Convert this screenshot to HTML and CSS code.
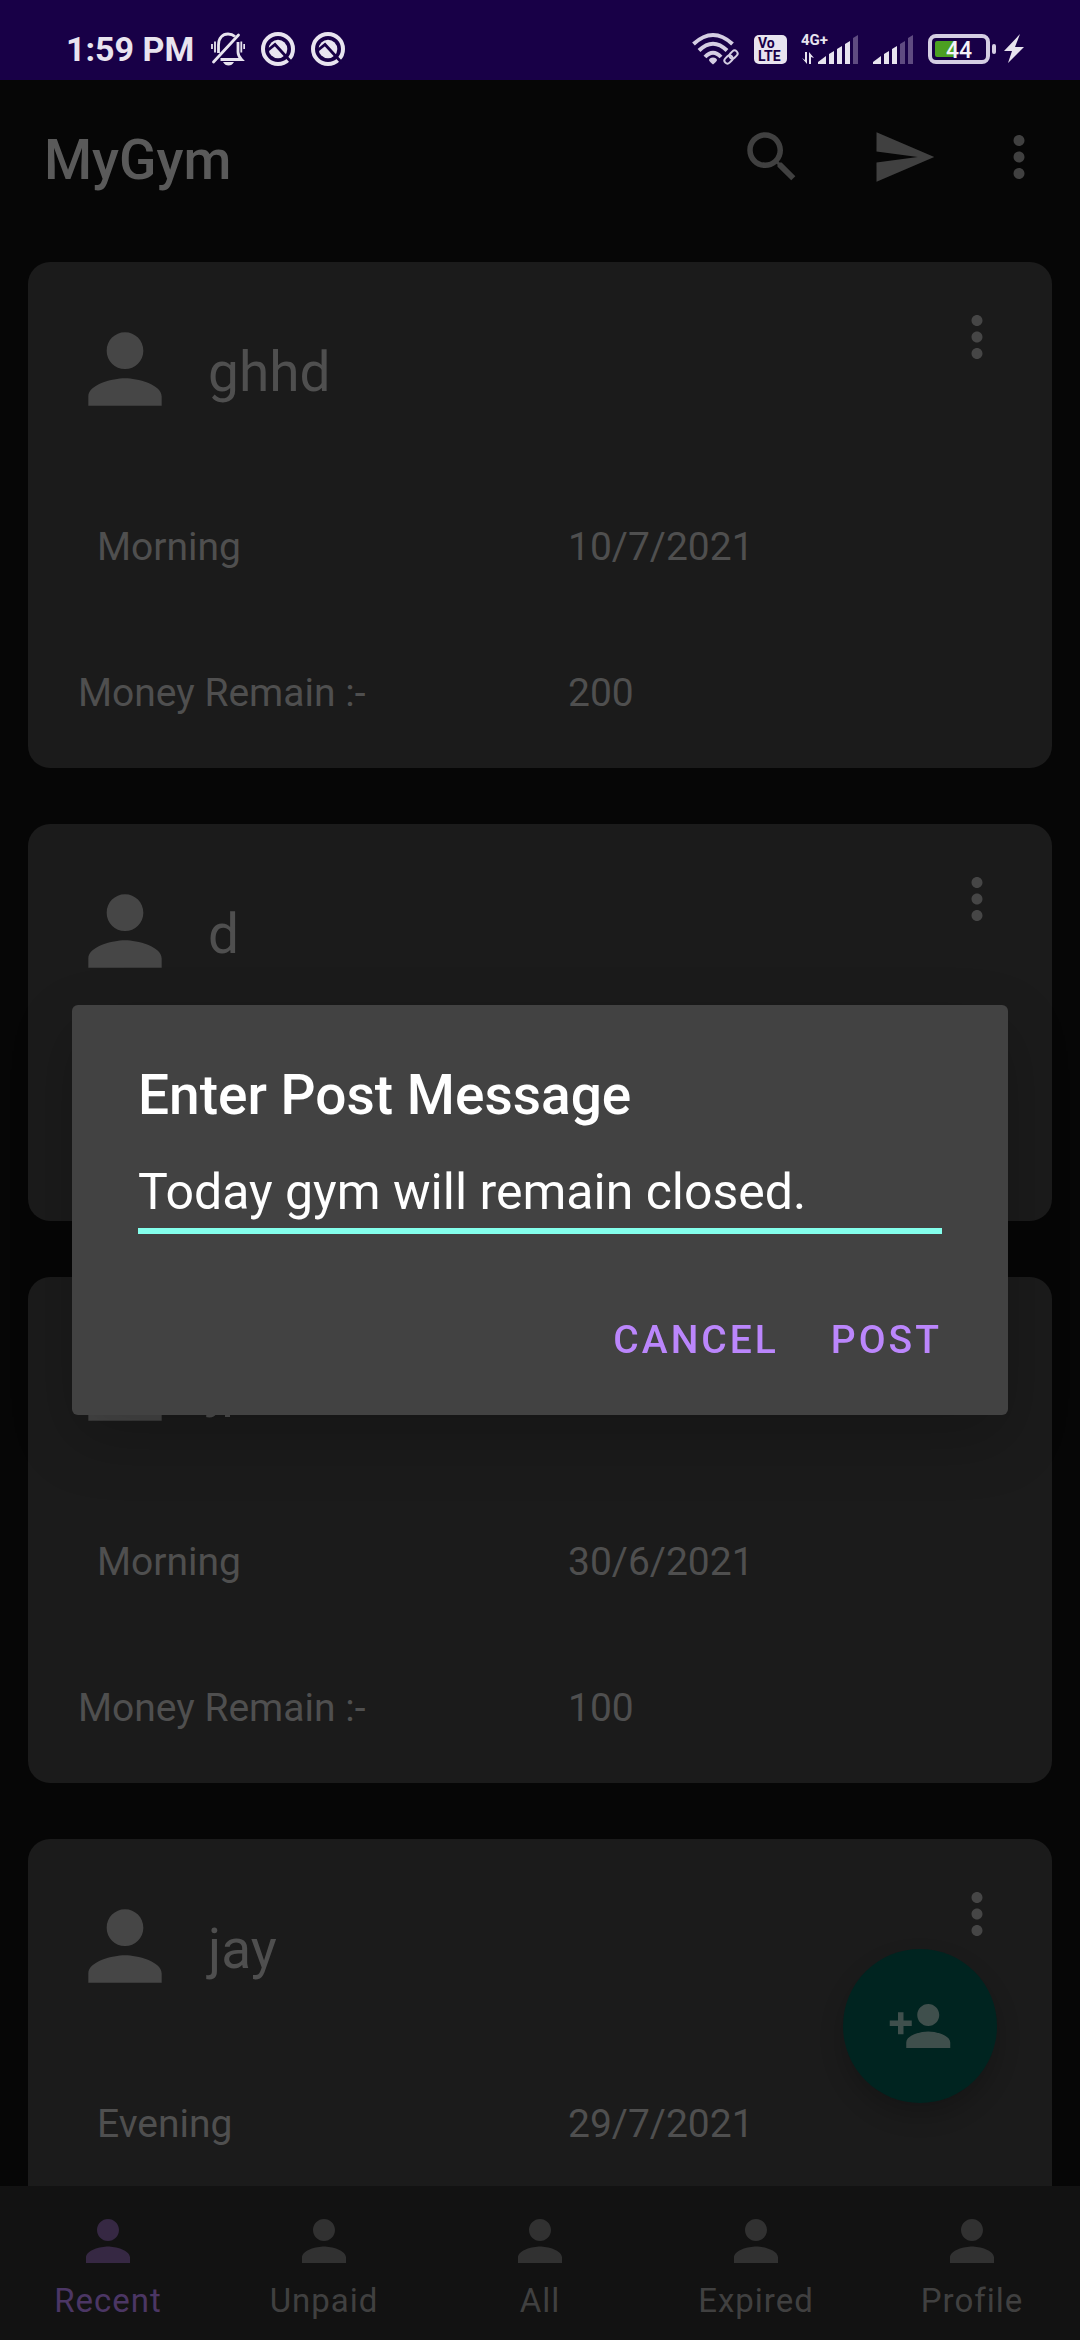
FILE: index.html
```html
<!DOCTYPE html>
<html lang="en">
<head>
  <meta charset="utf-8">
  <meta name="viewport" content="width=device-width, initial-scale=1">
  <title>MyGym</title>
  <link rel="stylesheet" href="styles.css">
</head>
<body>
  <svg class="sprite" aria-hidden="true">
    <symbol id="person" viewBox="0 0 24 24"><path d="M12 12c2.21 0 4-1.79 4-4s-1.79-4-4-4-4 1.79-4 4 1.79 4 4 4zm0 2c-2.67 0-8 1.34-8 4v2h16v-2c0-2.66-5.33-4-8-4z"/></symbol>
    <symbol id="more" viewBox="0 0 24 24"><path d="M12 8c1.1 0 2-.9 2-2s-.9-2-2-2-2 .9-2 2 .9 2 2 2zm0 2c-1.1 0-2 .9-2 2s.9 2 2 2 2-.9 2-2-.9-2-2-2zm0 6c-1.1 0-2 .9-2 2s.9 2 2 2 2-.9 2-2-.9-2-2-2z"/></symbol>
    <symbol id="scan" viewBox="0 0 34 34">
      <circle cx="17" cy="17" r="15" fill="none" stroke="currentColor" stroke-width="4"/>
      <circle cx="17" cy="17" r="9.300"/>
      <path class="glyph__cut" d="M6 19 14 12.500 31 31" fill="none" stroke-width="2.800"/>
    </symbol>
  </svg>

  <div class="app">
    <header class="status">
      <div class="status__side">
        <span class="status__time">1:59 PM</span>
        <svg class="glyph" width="34" height="34" viewBox="0 0 34 34" aria-label="Silent">
          <path fill="none" stroke="currentColor" stroke-width="2.800" d="M7.500 21V13C7.500 6 11.500 2 17 2Q21 2 24 4.500M27 10V20Q27 24 30.500 27.500H9.500"/>
          <path stroke="currentColor" stroke-width="2.800" stroke-linecap="round" d="M2.500 30 27.500 3"/>
          <path stroke="currentColor" stroke-width="1.800" d="M1 12v5M4 9.500v11M30.300 9.500v11M33.200 12v5"/>
          <path d="M12 30h11q-2 3.500-5.500 3.500T12 30Z"/>
        </svg>
        <svg class="glyph" width="34" height="34" aria-hidden="true"><use href="#scan"/></svg>
        <svg class="glyph" width="34" height="34" aria-hidden="true"><use href="#scan"/></svg>
      </div>
      <div class="status__side status__side--end">
        <svg class="glyph glyph--soft" width="48" height="34" viewBox="0 0 48 34" aria-label="Wi-Fi">
          <g fill="none" stroke="currentColor" stroke-width="4">
            <path d="M1.500 12Q21 -6 40.500 12"/>
            <path d="M7 18.500Q21 5 35 18.500"/>
            <path d="M13 25Q21 16.500 29 25"/>
          </g>
          <path d="M21 25.500q3.500 0 4 2.500 0 1-4 4.500-4-3.500-4-4.500.500-2.500 4-2.500Z"/>
          <g fill="none" stroke="currentColor" stroke-width="2" transform="rotate(-45 39 25)">
            <rect x="31" y="22" width="9" height="6" rx="3"/>
            <rect x="38" y="22" width="9" height="6" rx="3"/>
          </g>
        </svg>
        <svg class="glyph" width="33" height="30" viewBox="0 0 33 30" aria-label="VoLTE">
          <rect width="33" height="29" y="1" rx="5"/>
          <text class="glyph__dark" x="4" y="14" font-size="14">Vo</text>
          <text class="glyph__dark" x="4" y="27" font-size="14">LTE</text>
        </svg>
        <svg class="glyph" width="58" height="34" viewBox="0 0 58 34" aria-label="4G+ signal">
          <text class="glyph__label" x="0" y="13" font-size="15">4G+</text>
          <path d="M1 26 6 32V20H4v8ZM8 32V20l5 6-3-1v7Z"/>
          <path d="M17 32v-2l8-6v8ZM28 32V22l5-3v13ZM36 32V17l5-3v18ZM44 32V12l5-3v23Z"/>
          <path class="glyph__faint" d="M52 32V6l5-3v29Z"/>
        </svg>
        <svg class="glyph" width="41" height="34" viewBox="0 0 41 34" aria-label="Second signal">
          <path d="M0 32v-2l8-6v8ZM11 32V22l5-3v13ZM19 32V17l5-3v18Z"/>
          <path class="glyph__faint" d="M27 32V12l5-3v23ZM35 32V6l5-3v29Z"/>
        </svg>
        <span class="power">
          <svg class="glyph glyph--soft" width="68" height="30" viewBox="0 0 68 30" aria-label="Battery 44%">
            <rect x="2" y="2" width="58" height="26" rx="6" fill="none" stroke="currentColor" stroke-width="4"/>
            <rect x="64" y="10" width="4" height="10" rx="2"/>
            <path class="glyph__charge" d="M9 7h17v16H9q-2 0-2-2V9q0-2 2-2Z"/>
            <text class="glyph__level" x="31" y="24" text-anchor="middle" font-size="23">44</text>
          </svg>
          <svg class="glyph" width="20" height="30" viewBox="0 0 20 30" aria-label="Charging"><path d="M16 0 0 17h8L4 29 20 13h-9Z"/></svg>
        </span>
      </div>
    </header>

    <div class="appbar">
      <h1 class="appbar__title">MyGym</h1>
      <button class="icon-btn" type="button" aria-label="Search"><svg class="icon" viewBox="0 0 24 24"><path d="M15.500 14h-.79l-.28-.27C15.410 12.590 16 11.110 16 9.500 16 5.910 13.090 3 9.500 3S3 5.910 3 9.500 5.910 16 9.500 16c1.610 0 3.090-.59 4.230-1.570l.27.28v.79l5 4.990L20.490 19l-4.990-5zm-6 0C7.010 14 5 11.990 5 9.500S7.010 5 9.500 5 14 7.010 14 9.500 11.990 14 9.500 14z"/></svg></button>
      <button class="icon-btn" type="button" aria-label="Send"><svg class="icon" viewBox="0 0 24 24"><path d="M2.010 21 23 12 2.010 3 2 10l15 2-15 2z"/></svg></button>
      <button class="icon-btn icon-btn--narrow" type="button" aria-label="More options"><svg class="icon"><use href="#more"/></svg></button>
    </div>

    <main class="list">
      <article class="card">
        <div class="card__head">
          <svg class="card__avatar" aria-hidden="true"><use href="#person"/></svg>
          <h2 class="card__name">ghhd</h2>
          <button class="card__more" type="button" aria-label="Member options"><svg class="icon"><use href="#more"/></svg></button>
        </div>
        <div class="card__row"><span class="card__slot">Morning</span><span>10/7/2021</span></div>
        <div class="card__row"><span>Money Remain :-</span><span>200</span></div>
      </article>

      <article class="card card--short">
        <div class="card__head">
          <svg class="card__avatar" aria-hidden="true"><use href="#person"/></svg>
          <h2 class="card__name">d</h2>
          <button class="card__more" type="button" aria-label="Member options"><svg class="icon"><use href="#more"/></svg></button>
        </div>
      </article>

      <article class="card">
        <div class="card__head">
          <svg class="card__avatar" aria-hidden="true"><use href="#person"/></svg>
          <h2 class="card__name">jp</h2>
          <button class="card__more" type="button" aria-label="Member options"><svg class="icon"><use href="#more"/></svg></button>
        </div>
        <div class="card__row"><span class="card__slot">Morning</span><span>30/6/2021</span></div>
        <div class="card__row"><span>Money Remain :-</span><span>100</span></div>
      </article>

      <article class="card">
        <div class="card__head">
          <svg class="card__avatar" aria-hidden="true"><use href="#person"/></svg>
          <h2 class="card__name">jay</h2>
          <button class="card__more" type="button" aria-label="Member options"><svg class="icon"><use href="#more"/></svg></button>
        </div>
        <div class="card__row"><span class="card__slot">Evening</span><span>29/7/2021</span></div>
        <div class="card__row"></div>
      </article>

      <button class="fab" type="button" aria-label="Add member"><svg class="icon" viewBox="0 0 24 24"><path d="M15 12c2.210 0 4-1.790 4-4s-1.790-4-4-4-4 1.790-4 4 1.790 4 4 4zm-9-2V7H4v3H1v2h3v3h2v-3h3v-2H6zm9 4c-2.670 0-8 1.340-8 4v2h16v-2c0-2.660-5.330-4-8-4z"/></svg></button>
    </main>

    <nav class="tabs">
      <a class="tab tab--active" href="#recent"><svg class="icon"><use href="#person"/></svg>Recent</a>
      <a class="tab" href="#unpaid"><svg class="icon"><use href="#person"/></svg>Unpaid</a>
      <a class="tab" href="#all"><svg class="icon"><use href="#person"/></svg>All</a>
      <a class="tab" href="#expired"><svg class="icon"><use href="#person"/></svg>Expired</a>
      <a class="tab" href="#profile"><svg class="icon"><use href="#person"/></svg>Profile</a>
    </nav>
  </div>

  <div class="overlay">
    <form class="dialog" role="dialog" aria-labelledby="post-title">
      <label class="dialog__title" id="post-title" for="post-message">Enter Post Message</label>
      <input class="dialog__input" id="post-message" type="text" value="Today gym will remain closed.">
      <div class="dialog__actions">
        <button class="dialog__btn" type="button">CANCEL</button>
        <button class="dialog__btn" type="button">POST</button>
      </div>
    </form>
  </div>
</body>
</html>
```
FILE: styles.css
```css
* {
  box-sizing: border-box;
}

body {
  margin: 0;
  background: #060606;
  color: #4f4f4f;
  font-family: Roboto, "Noto Sans", sans-serif;
  font-size: 39px;
  line-height: 46px;
}

h1,
h2 {
  margin: 0;
}

button,
input {
  padding: 0;
  border: 0;
  background: none;
  color: inherit;
  font: inherit;
}

svg {
  display: block;
  flex: none;
  fill: currentColor;
}

.sprite {
  position: absolute;
  width: 0;
  height: 0;
}

.icon {
  width: 66px;
  height: 66px;
}

.app {
  display: flex;
  flex-direction: column;
  height: 100vh;
}

/* Status bar */

.status {
  display: flex;
  justify-content: space-between;
  flex: none;
  height: 80px;
  padding: 18px 56px 0 66px;
  background: #180047;
  color: #e8e4ef;
}

.status__side {
  display: flex;
  align-items: center;
  gap: 16px;
}

.status__side--end {
  gap: 14px;
}

.status__time {
  padding-right: 1px;
  font-size: 34px;
  font-weight: 700;
}

.power {
  display: flex;
  gap: 8px;
}

.glyph--soft {
  color: #d5cee3;
}

.glyph text {
  font-weight: 700;
}

.glyph__dark {
  fill: #180047;
}

.glyph__cut {
  stroke: #180047;
}

.glyph__faint {
  fill: #5f4b81;
}

.glyph__charge {
  fill: #4ca022;
}

.glyph .glyph__level {
  fill: #f4f2f8;
  font-weight: 500;
}

/* App bar */

.appbar {
  display: flex;
  align-items: center;
  flex: none;
  height: 154px;
  padding: 0 12px 0 44px;
}

.appbar__title {
  flex: 1;
  padding-top: 6px;
  color: #5a5a5a;
  font-size: 55px;
  font-weight: 500;
  line-height: 64px;
}

.icon-btn {
  display: grid;
  place-items: center;
  width: 132px;
  height: 132px;
  color: #404040;
}

.icon-btn--narrow {
  width: 98px;
}

/* Member list */

.list {
  position: relative;
  display: flex;
  flex-direction: column;
  flex: 1;
  gap: 56px;
  min-height: 0;
  padding: 28px 28px 0;
  overflow: hidden;
}

.card {
  flex: none;
  padding: 42px 42px 52px;
  border-radius: 22px;
  background: #1b1b1b;
}

.card--short {
  min-height: 397px;
}

.card__head {
  display: flex;
  align-items: flex-start;
  height: 120px;
}

.card__avatar {
  width: 110px;
  height: 110px;
  margin-top: 10px;
  color: #464646;
}

.card__name {
  flex: 1;
  padding: 36px 0 0 28px;
  font-size: 55px;
  font-weight: 400;
  line-height: 64px;
}

.card__more {
  color: #464646;
}

.card__row {
  display: grid;
  grid-template-columns: 490px 1fr;
  min-height: 46px;
  margin-top: 100px;
  padding-left: 8px;
}

.card__slot {
  padding-left: 19px;
}

.fab {
  position: absolute;
  right: 83px;
  bottom: 83px;
  display: grid;
  place-items: center;
  width: 154px;
  height: 154px;
  border-radius: 50%;
  background: #002420;
  color: #3f4f4c;
  box-shadow: 0 12px 24px rgba(0, 0, 0, 0.2);
}

/* Bottom navigation */

.tabs {
  display: flex;
  flex: none;
  height: 154px;
  background: #121212;
}

.tab {
  display: flex;
  flex-direction: column;
  align-items: center;
  flex: 1;
  gap: 5px;
  padding-top: 22px;
  color: #404040;
  font-size: 33px;
  letter-spacing: 1px;
  line-height: 44px;
  text-decoration: none;
}

.tab .icon {
  color: #313131;
}

.tab--active {
  color: #4b3664;
}

.tab--active .icon {
  color: #362843;
}

/* Post dialog */

.overlay {
  position: fixed;
  inset: 80px 0 0;
  display: flex;
  align-items: center;
  padding: 0 72px;
}

.dialog {
  display: flex;
  flex-direction: column;
  flex: 1;
  padding: 58px 66px 26px;
  border-radius: 6px;
  background: #424242;
  color: #ffffff;
  box-shadow: 0 24px 64px rgba(0, 0, 0, 0.2);
}

.dialog__title {
  font-size: 55px;
  font-weight: 500;
  line-height: 64px;
}

.dialog__input {
  width: 100%;
  height: 107px;
  padding-top: 28px;
  border-bottom: 6px solid #84ffec;
  font-size: 50px;
  outline: 0;
}

.dialog__actions {
  display: flex;
  justify-content: flex-end;
  gap: 52px;
  margin-top: 56px;
}

.dialog__btn {
  height: 99px;
  color: #bb86fc;
  font-size: 39px;
  font-weight: 500;
  letter-spacing: 3px;
}
```
